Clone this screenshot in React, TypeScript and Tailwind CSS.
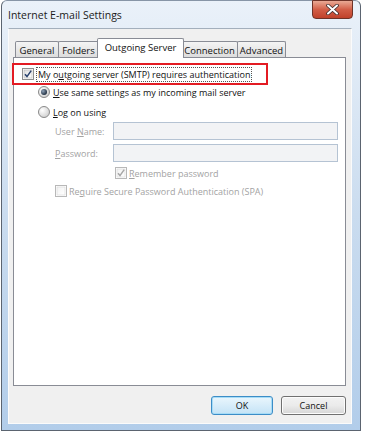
import React from "react";

function CheckBox({ checked, disabled }: { checked?: boolean; disabled?: boolean }) {
  const border = disabled ? "#b8b8b8" : "#8e8f8f";
  const mark = disabled ? "#a6a6a6" : "#27406d";
  return (
    <svg width="12" height="12" viewBox="0 0 12 12" className="shrink-0">
      <defs>
        <linearGradient id={disabled ? "cbd" : "cbe"} x1="0" y1="0" x2="1" y2="1">
          <stop offset="0" stopColor={disabled ? "#f2f2f2" : "#dcdcdc"} />
          <stop offset="1" stopColor="#ffffff" />
        </linearGradient>
      </defs>
      <rect x="0.5" y="0.5" width="11" height="11" fill="#fff" stroke={border} />
      <rect x="2" y="2" width="8" height="8" fill={`url(#${disabled ? "cbd" : "cbe"})`} stroke={disabled ? "#d6d6d6" : "#b5b5b5"} strokeWidth="0.6" />
      {checked && <path d="M3 6.2 L5 8.6 L9.2 2.6" fill="none" stroke={mark} strokeWidth="1.5" />}
    </svg>
  );
}

function Radio({ checked }: { checked?: boolean }) {
  return (
    <svg width="12" height="12" viewBox="0 0 12 12" className="shrink-0">
      <defs>
        <radialGradient id="rbg" cx="0.35" cy="0.35" r="0.7">
          <stop offset="0" stopColor="#ffffff" />
          <stop offset="1" stopColor="#cfcfcf" />
        </radialGradient>
        <radialGradient id="rdot" cx="0.35" cy="0.35" r="0.7">
          <stop offset="0" stopColor="#8fa2b8" />
          <stop offset="1" stopColor="#1b2a3c" />
        </radialGradient>
      </defs>
      <circle cx="6" cy="6" r="5.5" fill="url(#rbg)" stroke="#8a8a8a" />
      {checked && <circle cx="6" cy="6" r="3" fill="url(#rdot)" />}
    </svg>
  );
}

const tabs = [
  { label: "General", w: "w-[44px]" },
  { label: "Folders", w: "w-[41px]" },
  { label: "Outgoing Server", w: "w-[87px]", active: true },
  { label: "Connection", w: "w-[57px]" },
  { label: "Advanced", w: "w-[49px]" },
];

export default function App() {
  return (
    <div className="w-[365px] h-[437px] bg-white font-['Open_Sans','Noto_Sans',sans-serif] text-[9px] leading-[13px] text-[#111] whitespace-nowrap">
      {/* window frame */}
      <div className="ml-[1px] w-[360px] h-[431px] rounded-t-[6px] border border-[#5b6470] border-t-[#8795a6] bg-gradient-to-b from-[#eaf1f9] via-[#cadcef] to-[#b2cdea] flex flex-col pl-[6px] pr-[8px] pb-[6px]">
        {/* title bar */}
        <div className="h-[27px] flex items-start shrink-0">
          <span className="pt-[8px] text-[10.5px] text-[#1b1b1b]">Internet E-mail Settings</span>
          <div className="ml-auto -mr-[1px] -mt-[1px] w-[41px] h-[19px] rounded-b-[4px] border border-[#6e3328] bg-gradient-to-b from-[#e9a995] via-[#d25e47] to-[#c0412a] flex items-center justify-center">
            <svg width="13" height="11" viewBox="0 0 13 11">
              <path d="M2 1.5 L11 9.5 M11 1.5 L2 9.5" stroke="#3b2a2a" strokeWidth="3.6" strokeLinecap="round" />
              <path d="M2 1.5 L11 9.5 M11 1.5 L2 9.5" stroke="#ffffff" strokeWidth="2" strokeLinecap="round" />
            </svg>
          </div>
        </div>

        {/* client area */}
        <div className="flex-1 bg-[#f0f0f0] border border-[#fbfbfb] border-t-[#a3afbc] flex flex-col">
          {/* tabs */}
          <div className="pt-[9px] pl-[6px] flex items-end h-[28px] relative z-10 text-[9.5px]">
            {tabs.map((t) =>
              t.active ? (
                <div
                  key={t.label}
                  className={`${t.w} h-[20px] -mb-[1px] -mr-[2px] -ml-[2px] bg-white border border-b-0 border-[#898c95] rounded-t-[2px] flex items-start justify-center pt-[2px] relative`}
                >
                  {t.label}
                </div>
              ) : (
                <div
                  key={t.label}
                  className={`${t.w} h-[16px] -ml-[1px] first:ml-0 bg-gradient-to-b from-[#f4f4f4] to-[#dddddd] border border-b-0 border-[#898c95] rounded-t-[2px] flex items-center justify-center pt-[1px]`}
                >
                  {t.label}
                </div>
              )
            )}
          </div>

          {/* tab panel */}
          <div className="ml-[4px] mr-[5px] h-[329px] bg-white border border-[#898c95] flex flex-col">
            <div className="mt-[5px] -ml-[2px] w-[256px] h-[22px] border-2 border-[#e31b23] flex items-center pl-[8px]">
              <CheckBox checked />
              <span className="ml-[2px] px-[1px] border border-dotted border-[#555] leading-[13px]">
                My o<u>u</u>tgoing server (SMTP) requires authentication
              </span>
            </div>

            <div className="h-[14px] flex items-center ml-[24px] gap-[3px]">
              <Radio checked />
              <span>
                <u>U</u>se same settings as my incoming mail server
              </span>
            </div>

            <div className="mt-[6px] h-[14px] flex items-center ml-[24px] gap-[3px]">
              <Radio />
              <span>
                <u>L</u>og on using
              </span>
            </div>

            <div className="mt-[3px] h-[18px] flex items-center ml-[41px] text-[#a3a3a3]">
              <span className="w-[58px]">
                User <u>N</u>ame:
              </span>
              <div className="w-[225px] h-[18px] border border-[#b5c3d3] bg-[#f2f3f5]" />
            </div>

            <div className="mt-[4px] h-[18px] flex items-center ml-[41px] text-[#a3a3a3]">
              <span className="w-[58px]">
                <u>P</u>assword:
              </span>
              <div className="w-[225px] h-[18px] border border-[#b5c3d3] bg-[#f2f3f5]" />
            </div>

            <div className="mt-[4px] h-[14px] flex items-center ml-[101px] gap-[2px] text-[#a3a3a3]">
              <CheckBox checked disabled />
              <span>
                <u>R</u>emember password
              </span>
            </div>

            <div className="mt-[4px] h-[14px] flex items-center ml-[41px] gap-[2px] text-[#a3a3a3]">
              <CheckBox disabled />
              <span>
                Re<u>q</u>uire Secure Password Authentication (SPA)
              </span>
            </div>
          </div>

          {/* buttons */}
          <div className="mt-[10px] flex justify-end gap-[8px] pr-[5px]">
            <button className="w-[62px] h-[19px] rounded-[3px] border border-[#3c8dc7] bg-gradient-to-b from-[#eaf6fd] to-[#c4e3f6] shadow-[inset_0_0_0_1px_#a6dcf7] text-[9px]">
              OK
            </button>
            <button className="w-[65px] h-[19px] rounded-[3px] border border-[#707070] bg-gradient-to-b from-[#f2f2f2] via-[#ebebeb] to-[#d6d6d6] shadow-[inset_0_0_0_1px_#fcfcfc] text-[9px]">
              Cancel
            </button>
          </div>
        </div>
      </div>
    </div>
  );
}
